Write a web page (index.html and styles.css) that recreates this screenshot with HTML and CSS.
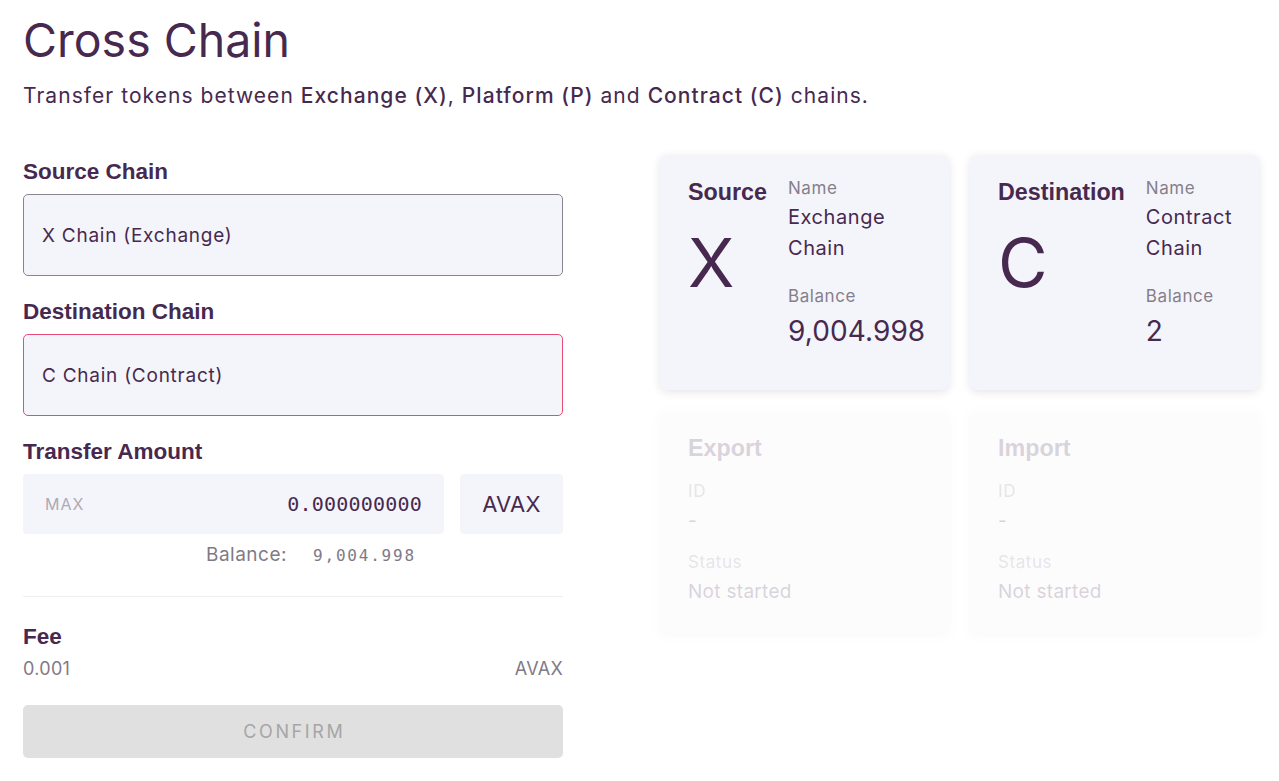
FILE: index.html
```html
<!DOCTYPE html>
<html lang="en">
<head>
<meta charset="utf-8">
<title>Cross Chain</title>
<link rel="stylesheet" href="styles.css">
</head>
<body>
<div class="page">
  <header class="head">
    <h1 class="title">Cross Chain</h1>
    <p class="subtitle">Transfer tokens between <b>Exchange (X)</b>, <b>Platform (P)</b> and <b>Contract (C)</b> chains.</p>
  </header>
  <main class="layout">
    <section class="form">
      <h3 class="label">Source Chain</h3>
      <div class="select">X Chain (Exchange)</div>
      <h3 class="label">Destination Chain</h3>
      <div class="select select-err">C Chain (Contract)</div>
      <h3 class="label">Transfer Amount</h3>
      <div class="amount-row">
        <div class="amount">
          <span class="max">MAX</span>
          <span class="amount-val">0.000000000</span>
        </div>
        <div class="token">AVAX</div>
      </div>
      <div class="bal-row">
        <span class="bal-label">Balance:</span>
        <span class="bal-val">9,004.998</span>
      </div>
      <hr class="divider">
      <h3 class="label fee-label">Fee</h3>
      <div class="fee-row">
        <span>0.001</span>
        <span>AVAX</span>
      </div>
      <button class="confirm" disabled>CONFIRM</button>
    </section>
    <section class="cards">
      <div class="card">
        <div class="card-side">
          <h4 class="card-title">Source</h4>
          <div class="chain-letter">X</div>
        </div>
        <div class="card-info">
          <div class="info-label">Name</div>
          <div class="info-name">Exchange<br>Chain</div>
          <div class="info-label">Balance</div>
          <div class="info-bal">9,004.998</div>
        </div>
      </div>
      <div class="card">
        <div class="card-side">
          <h4 class="card-title">Destination</h4>
          <div class="chain-letter">C</div>
        </div>
        <div class="card-info">
          <div class="info-label">Name</div>
          <div class="info-name">Contract<br>Chain</div>
          <div class="info-label">Balance</div>
          <div class="info-bal">2</div>
        </div>
      </div>
      <div class="card card-off">
        <div class="tx">
          <h4 class="card-title">Export</h4>
          <div class="info-label">ID</div>
          <div class="tx-val">-</div>
          <div class="info-label">Status</div>
          <div class="tx-val">Not started</div>
        </div>
      </div>
      <div class="card card-off">
        <div class="tx">
          <h4 class="card-title">Import</h4>
          <div class="info-label">ID</div>
          <div class="tx-val">-</div>
          <div class="info-label">Status</div>
          <div class="tx-val">Not started</div>
        </div>
      </div>
    </section>
  </main>
</div>
</body>
</html>
```

FILE: styles.css
```css
* { box-sizing: border-box; }
html, body { margin: 0; padding: 0; background: #fff; }
body {
  font-family: Inter, Roboto, "Noto Sans", sans-serif;
  letter-spacing: 0.035em;
  color: #47294f;
}
.page { padding: 12px 20px 0 23px; }

.title {
  margin: 0;
  font-size: 46.5px;
  line-height: 56px;
  font-weight: 400;
  letter-spacing: 0;
  color: #47294f;
}
.subtitle {
  margin: 14px 0 0;
  font-size: 21px;
  line-height: 28px;
  letter-spacing: 0.05em;
  color: #47294f;
}
.subtitle b { font-weight: 500; }

.layout {
  display: flex;
  margin-top: 45px;
}

/* form */
.form {
  width: 540px;
  flex: none;
  display: flex;
  flex-direction: column;
  padding-top: 4px;
}
.label {
  margin: 23px 0 9px;
  font-family: "Liberation Sans", Arial, sans-serif;
  font-size: 22.5px;
  line-height: 26px;
  font-weight: 700;
  letter-spacing: 0;
  color: #47294f;
}
.form .label:first-child { margin-top: 0; }
.select {
  height: 82px;
  border: 1px solid #8a8490;
  border-radius: 5px;
  background: #f4f5fa;
  display: flex;
  align-items: center;
  padding: 0 18px;
  font-size: 19px;
  letter-spacing: 0.75px;
  color: #47294f;
}
.select-err { border-color: #e84b74; }

.amount-row { display: flex; gap: 16px; height: 60px; }
.amount {
  flex: 1;
  background: #f4f5fa;
  border-radius: 4px;
  display: flex;
  align-items: center;
  justify-content: space-between;
  padding: 0 22px;
}
.max { font-size: 16px; color: #b0a9b6; letter-spacing: 1px; }
.amount-val {
  font-family: "DejaVu Sans Mono", "Liberation Mono", monospace;
  font-size: 20px;
  letter-spacing: 0.2px;
  color: #47294f;
}
.token {
  width: 103px;
  background: #f4f5fa;
  border-radius: 4px;
  display: flex;
  align-items: center;
  justify-content: center;
  font-size: 22px;
  letter-spacing: 0.3px;
  color: #47294f;
}
.bal-row {
  display: flex;
  align-items: baseline;
  gap: 26px;
  padding-left: 183px;
  margin-top: 8px;
  line-height: 26px;
  color: #7f7a86;
}
.bal-label { font-size: 19px; letter-spacing: 0.5px; }
.bal-val {
  font-family: "DejaVu Sans Mono", "Liberation Mono", monospace;
  font-size: 16px;
  letter-spacing: 1.8px;
}
.divider {
  margin: 27px 0 0;
  border: 0;
  border-top: 1px solid #efeef2;
  height: 0;
}
.fee-label { margin-top: 27px; margin-bottom: 7px; }
.fee-row {
  display: flex;
  justify-content: space-between;
  font-size: 18px;
  line-height: 24px;
  letter-spacing: 0.3px;
  color: #7f7a86;
}
.confirm {
  margin-top: 24px;
  height: 53px;
  border: 0;
  border-radius: 5px;
  background: #e0e0e0;
  color: #a6a6a6;
  font-family: Inter, Roboto, sans-serif;
  font-size: 18px;
  letter-spacing: 2.6px;
  text-indent: 2.6px;
}

/* cards */
.cards {
  flex: 1;
  margin-left: 97px;
  display: grid;
  grid-template-columns: 289px 289px;
  grid-template-rows: 235px 221px;
  column-gap: 21px;
  row-gap: 22px;
  align-content: start;
}
.card {
  background: #f4f5fa;
  border-radius: 7px;
  box-shadow: 0 2px 9px rgba(60, 40, 80, 0.13);
  display: flex;
  gap: 21px;
  padding: 23px 16px 20px 28px;
}
.card-side { display: flex; flex-direction: column; }
.card-title {
  margin: 0;
  font-family: "Liberation Sans", Arial, sans-serif;
  font-size: 23.3px;
  line-height: 28px;
  font-weight: 700;
  letter-spacing: 0;
  color: #47294f;
}
.chain-letter {
  font-size: 68px;
  line-height: 80px;
  margin-top: 16px;
  letter-spacing: 0;
  color: #47294f;
}
.info-label {
  font-size: 17px;
  line-height: 20px;
  color: #857f8b;
}
.info-name {
  font-size: 20px;
  line-height: 31px;
  margin-top: 4px;
  margin-bottom: 22px;
  color: #47294f;
}
.info-bal {
  font-size: 28px;
  line-height: 36px;
  margin-top: 7px;
  letter-spacing: 0.1px;
  color: #47294f;
}
.card-off { opacity: 0.2; padding-top: 22px; }
.tx { display: flex; flex-direction: column; }
.tx .card-title { margin-bottom: 19px; }
.tx .info-label { margin-bottom: 8px; }
.tx-val {
  font-size: 19px;
  line-height: 24px;
  margin-bottom: 19px;
  letter-spacing: 0.3px;
  color: #47294f;
}
```
